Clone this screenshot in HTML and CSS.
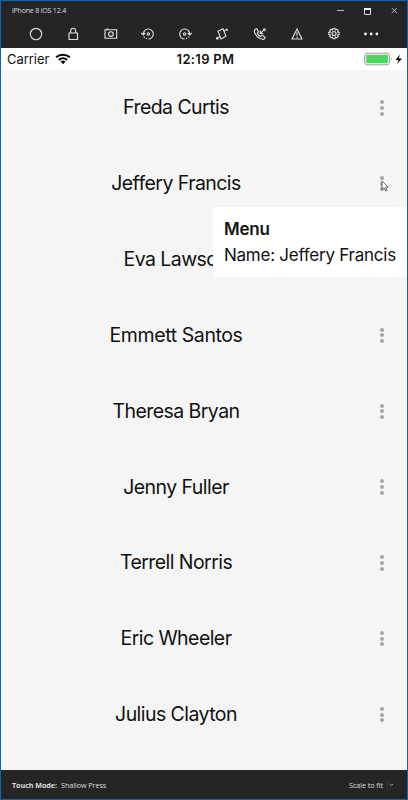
FILE: index.html
```html
<!DOCTYPE html>
<html lang="en">
<head>
<meta charset="utf-8">
<title>iPhone 8 iOS 12.4</title>
<link rel="stylesheet" href="styles.css">
</head>
<body>
<div class="window">
  <header class="chrome">
    <div class="titlebar">
      <span class="title">iPhone 8 iOS 12.4</span>
      <svg class="controls" width="66" height="14" viewBox="0 0 66 14"><path d="M0 7.500h7" stroke="#bbb"/><path d="M27.500 6v5.500h6V6" fill="none" stroke="#ddd"/><path d="M27 6h7" stroke="#eee" stroke-width="2"/><path d="M54.800 5l5 5m0-5l-5 5" stroke="#ccc" stroke-width=".9"/></svg>
    </div>
    <div class="toolbar">
      <svg viewBox="0 0 16 16"><circle cx="8" cy="8" r="5.700"/></svg>
      <svg viewBox="0 0 16 16"><path d="M4 7h8.500v6.500H4zM5.700 7V4.700a2.500 2.500 0 0 1 5 0V7"/></svg>
      <svg viewBox="0 0 16 16"><path d="M2 3.700h11.700v8.500H2zM3.500 3h2"/><circle cx="7.900" cy="8" r="2.300"/></svg>
      <svg viewBox="0 0 16 16"><path d="M3.300 7.800a5 5 0 1 1 5 5.200M1.200 7l2.100 2 2-2M3.800 10.600l.8 1M5.800 12.300l1.200.5"/><circle cx="8.400" cy="7.900" r="1.200"/></svg>
      <svg viewBox="0 0 16 16"><path d="M12.700 7.800a5 5 0 1 0-5 5.200M14.800 7l-2.100 2-2-2M12.200 10.600l-.8 1M10.200 12.300l-1.200.5"/><circle cx="7.600" cy="7.900" r="1.200"/></svg>
      <svg viewBox="0 0 16 16"><path d="M4 5.200l5-2.500 3 7.600-5 2.700zM10.500 5l2.200-1.600M11.500 3.200h1.800v1.600M5.500 10.700l-2.200 1.600M2.700 10.900v1.900h1.800"/></svg>
      <svg viewBox="0 0 16 16"><path d="M3.200 3.200l1.500-.5 1.800 3-1.100 1.500c.6 1.500 1.700 2.600 3.200 3.200l1.500-1.200 3 2-.6 1.600c-.9.700-2.500.6-4.200-.2C5.700 11.400 3.600 9.100 2.700 6.800c-.5-1.500-.3-2.800.5-3.600zM8.300 4.500v3h3M8.500 7.300l4-4M11 3h2v2.200"/></svg>
      <svg viewBox="0 0 16 16"><path d="M8 3l5 10H3zM8 6.200v3.600M8 10.700v1.200"/></svg>
      <svg viewBox="0 0 16 16"><path d="M7 2.500h2l.4 1.500 1.400-.8 1.500 1.500-.8 1.400 1.600.4v2l-1.600.5.8 1.400-1.500 1.500-1.400-.8-.4 1.600H7l-.5-1.600-1.400.8-1.500-1.500.8-1.400-1.600-.5v-2l1.600-.4-.8-1.400 1.500-1.500 1.400.8z"/><circle cx="8" cy="7.600" r="2"/></svg>
      <svg class="filled" viewBox="0 0 16 16"><circle cx="2.500" cy="8" r="1.400"/><circle cx="8.200" cy="8" r="1.400"/><circle cx="13.900" cy="8" r="1.400"/></svg>
    </div>
  </header>
  <main class="screen">
    <div class="status">
      <div class="carrier"><span>Carrier</span>
        <svg width="16" height="12" viewBox="0 0 16 12"><path d="M1.200 4.300a10 10 0 0 1 13.600 0M3.800 6.900a6.200 6.200 0 0 1 8.400 0" fill="none" stroke="#000" stroke-width="2"/><path d="M5.500 8.600a3.600 3.600 0 0 1 5 0L8 11.200z"/></svg>
      </div>
      <span class="clock">12:19 PM</span>
      <svg class="battery" width="40" height="14" viewBox="0 0 40 14"><rect x=".7" y="1.200" width="24.800" height="11.600" rx="2.800" fill="#fff" stroke="#999"/><rect x="2.200" y="2.700" width="21.800" height="8.600" rx="1.200" fill="#4cd65f"/><path d="M27 5v4q1.600-2 0-4" fill="#999"/><path d="M36 2.500L31.500 8h3L33 12l5-5.600h-3.200z"/></svg>
    </div>
    <ul class="list">
      <li><span class="name">Freda Curtis</span><span class="more"><i></i><i></i><i></i></span></li>
      <li><span class="name">Jeffery Francis</span><span class="more"><i></i><i></i><i></i></span>
        <svg class="cursor" width="8" height="12" viewBox="0 0 8 12"><path d="M1 .8v8.700l2-1.800 1.400 3.300 1.600-.7-1.400-3.100h2.600z" fill="#fff" stroke="#555" stroke-width=".9"/></svg>
        <div class="popup"><strong>Menu</strong><span>Name: Jeffery Francis</span></div>
      </li>
      <li><span class="name">Eva Lawson</span><span class="more"><i></i><i></i><i></i></span></li>
      <li><span class="name wide">Emmett Santos</span><span class="more"><i></i><i></i><i></i></span></li>
      <li><span class="name">Theresa Bryan</span><span class="more"><i></i><i></i><i></i></span></li>
      <li><span class="name">Jenny Fuller</span><span class="more"><i></i><i></i><i></i></span></li>
      <li><span class="name">Terrell Norris</span><span class="more"><i></i><i></i><i></i></span></li>
      <li><span class="name">Eric Wheeler</span><span class="more"><i></i><i></i><i></i></span></li>
      <li><span class="name">Julius Clayton</span><span class="more"><i></i><i></i><i></i></span></li>
    </ul>
  </main>
  <footer class="footer">
    <span class="touch"><b>Touch Mode:</b><span>Shallow Press</span></span>
    <span class="scale"><span>Scale to fit</span><svg width="10" height="12" viewBox="0 0 10 12"><path d="M.5 0v12" stroke="#333"/><path d="M2.800 5l1.700 1.500L6.200 5" fill="none" stroke="#aaa"/></svg></span>
  </footer>
</div>
</body>
</html>
```
FILE: styles.css
```css
* { box-sizing: border-box; }
body { margin: 0; font-family: Inter, "Liberation Sans", sans-serif; color: #111; }
.window {
  width: 408px;
  height: 800px;
  border: 1px solid #1564a9;
  display: flex;
  flex-direction: column;
  overflow: hidden;
  background: #f5f5f5;
}
.chrome { height: 47px; background: #252525; color: #ddd; flex: none; }
.titlebar { height: 19px; display: flex; justify-content: space-between; padding: 2px 4px 0 11px; }
.title { font: 7px/15px "Open Sans", sans-serif; white-space: nowrap; letter-spacing: -0.18px; }
.controls { display: block; fill: none; }
.toolbar { display: grid; grid-template-columns: repeat(10, 37.250px); justify-items: center; padding-left: 16.500px; margin-top: 6px; }
.toolbar svg { width: 16px; height: 16px; fill: none; stroke: #ddd; stroke-width: 1.150; }
.toolbar .filled { fill: #eee; stroke: none; }
.screen { flex: 1; display: flex; flex-direction: column; min-height: 0; }
.status {
  height: 22px;
  background: #fff;
  display: grid;
  grid-template-columns: 1fr auto 1fr;
  align-items: center;
  padding: 0 3px 0 6px;
  flex: none;
}
.carrier { display: flex; align-items: center; gap: 6px; font-size: 13px; letter-spacing: -0.05px; }
.clock { font-size: 13px; font-weight: 600; letter-spacing: 0.32px; }
.battery { justify-self: end; }
.list { list-style: none; margin: 0; padding: 0; }
.list li { height: 75.830px; display: flex; align-items: center; position: relative; }
.name { width: 350px; padding-bottom: 1px; text-align: center; font-size: 19.500px; line-height: 24px; letter-spacing: -0.560px; white-space: nowrap; }
.name.wide { letter-spacing: -0.400px; }
.more { width: 50px; margin-left: 6px; display: flex; flex-direction: column; align-items: center; gap: 1.700px; }
.more i { width: 4px; height: 4px; border-radius: 50%; background: #a5a5a5; }
.cursor { position: absolute; left: 380px; top: 34px; }
.popup {
  position: absolute;
  z-index: 2;
  right: 0;
  top: 61.500px;
  width: 194px;
  height: 70px;
  padding: 9px 0 0 11px;
  background: #fff;
  font-size: 17px;
  line-height: 26px;
  white-space: nowrap;
  display: flex;
  flex-direction: column;
}
.popup strong { font-weight: 600; letter-spacing: -0.200px; }
.popup span { letter-spacing: -0.250px; }
.footer {
  height: 29px;
  background: #252525;
  color: #ddd;
  display: flex;
  justify-content: space-between;
  align-items: center;
  padding: 0 10px 0 11px;
  font: 7.200px/12px "Open Sans", sans-serif;
  letter-spacing: -0.060px;
  flex: none;
}
.touch, .scale { display: flex; align-items: center; gap: 4px; white-space: nowrap; }
```
